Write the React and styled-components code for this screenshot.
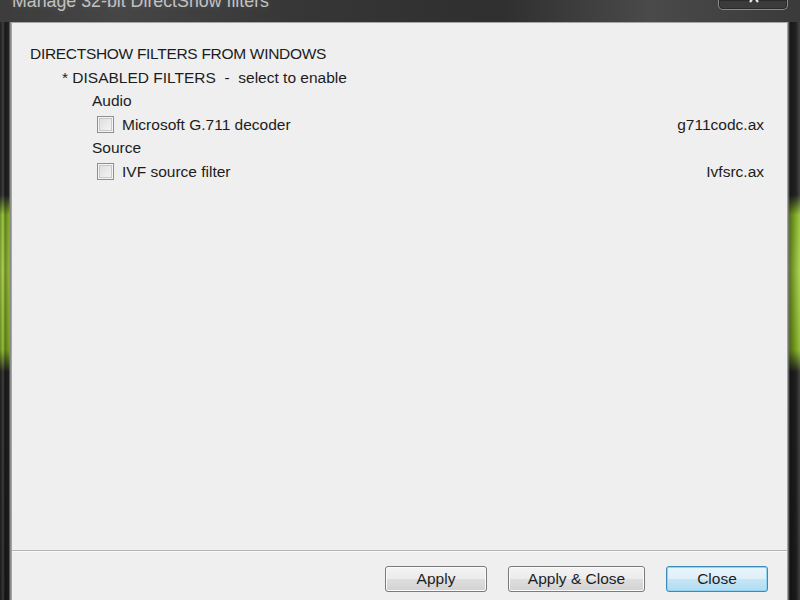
import React from 'react'
import styled, { createGlobalStyle } from 'styled-components'

const GlobalStyle = createGlobalStyle`
  html, body {
    margin: 0;
    padding: 0;
    background: #1f1f1f;
  }
  * {
    box-sizing: border-box;
  }
`

const filters = [
    {
        group: 'Audio',
        items: [{ name: 'Microsoft G.711 decoder', file: 'g711codc.ax' }],
    },
    {
        group: 'Source',
        items: [{ name: 'IVF source filter', file: 'Ivfsrc.ax' }],
    },
]

const App = () => {
    return (
        <>
            <GlobalStyle />
            <Window>
                <TitleBar>
                    <Title>Manage 32-bit DirectShow filters</Title>
                    <CloseCaption>
                        {/* only the feet of the caption X show below the screen edge */}
                        <svg width="14" height="10" viewBox="0 0 14 10">
                            <path d="M2 -10 L11 2 M12 -10 L3 2" stroke="#e8e8e8" strokeWidth="2.2" fill="none" />
                        </svg>
                    </CloseCaption>
                </TitleBar>
                <Client>
                    <Content>
                        <Line $indent={0} $caps>DIRECTSHOW FILTERS FROM WINDOWS</Line>
                        <Line $indent={32}>* DISABLED FILTERS&nbsp; - &nbsp;select to enable</Line>
                        {filters.map((g) => (
                            <React.Fragment key={g.group}>
                                <Line $indent={62}>{g.group}</Line>
                                {g.items.map((f) => (
                                    <FilterRow key={f.name}>
                                        <CheckLabel>
                                            <Check />
                                            {f.name}
                                        </CheckLabel>
                                        <FileName>{f.file}</FileName>
                                    </FilterRow>
                                ))}
                            </React.Fragment>
                        ))}
                    </Content>
                    <Footer>
                        <Button $w={102}>Apply</Button>
                        <Button $w={137}>Apply &amp; Close</Button>
                        <Button $w={102} $primary>Close</Button>
                    </Footer>
                </Client>
            </Window>
        </>
    )
}

export default App

const Window = styled.div`
width: 800px;
height: 600px;
display: flex;
flex-direction: column;
font-family: 'Liberation Sans', Arial, sans-serif;
background:
    linear-gradient(to right,
        rgba(0, 0, 0, 0.25) 0, rgba(255, 255, 255, 0.12) 3px, rgba(0, 0, 0, 0.35) 5px,
        rgba(0, 0, 0, 0.1) 9px, #8a8a8a 10px, #8a8a8a 11px, transparent 11px,
        transparent 788px, #7a7a7a 788px, rgba(0, 0, 0, 0.4) 790px,
        rgba(0, 0, 0, 0.1) 796px, rgba(255, 255, 255, 0.15) 800px),
    linear-gradient(to bottom, #262626 0, #262626 195px, #8fbf2c 215px, #a2cc40 270px, #86b424 350px, #232323 372px, #1e1e1e 600px);
`

const TitleBar = styled.div`
height: 22px;
display: flex;
justify-content: space-between;
align-items: flex-start;
padding: 0 12px;
background: linear-gradient(to right, #3c3c3c 0, #464646 120px, #363636 300px, #2f2f2f 500px, #4a4a4a 650px, #3a3a3a 800px);
`

const Title = styled.div`
margin-top: -8px;
font-size: 17.8px;
line-height: 18px;
color: #c2c2c2;
text-shadow: 0 0 6px rgba(255, 255, 255, 0.15);
`

const CloseCaption = styled.div`
width: 70px;
height: 10px;
display: flex;
justify-content: center;
align-items: flex-start;
border: 1px solid #8a8a8a;
border-top: none;
border-radius: 0 0 5px 5px;
background: #3b3b3b;
box-shadow: inset 0 0 0 1px #2a2a2a;

svg {
    display: block;
    margin-left: 2px;
}
`

const Client = styled.div`
flex: 1;
display: flex;
flex-direction: column;
margin: 0 12px 0 11px;
background: #efefef;
border: 1px solid #a5a5a5;
border-bottom: none;
`

const Content = styled.div`
flex: 1;
padding: 19px 23px 0 18px;
font-size: 15.5px;
line-height: 23.5px;
color: #1c1c1c;
`

const Line = styled.div`
padding-left: ${(p) => p.$indent}px;
letter-spacing: ${(p) => (p.$caps ? '-0.3px' : '0')};
`

const FilterRow = styled.div`
display: flex;
justify-content: space-between;
align-items: center;
padding-left: 67px;
height: 23.5px;
`

const CheckLabel = styled.div`
display: flex;
align-items: center;
gap: 8px;
`

const Check = styled.span`
width: 17px;
height: 17px;
border: 1px solid #8f8f8f;
background: linear-gradient(135deg, #dcdcdc, #f6f6f6);
box-shadow: inset 0 0 0 1px #f4f4f4, inset 0 0 0 2px #c8c8c8;
`

const FileName = styled.div``

const Footer = styled.div`
height: 50px;
display: flex;
justify-content: flex-end;
align-items: flex-start;
gap: 21px;
padding: 15px 19px 0 0;
border-top: 1px solid #b4b4b4;
box-shadow: inset 0 1px 0 #f8f8f8;
`

const Button = styled.button`
width: ${(p) => p.$w}px;
height: 26px;
padding: 0;
font-family: 'Liberation Sans', Arial, sans-serif;
font-size: 15.5px;
color: #1e1e1e;
border-radius: 3px;
border: 1px solid ${(p) => (p.$primary ? '#3c8ab8' : '#7a7a7a')};
background: ${(p) =>
    p.$primary
        ? 'linear-gradient(to bottom, #e8f5fc 0, #dff0fa 48%, #c4e5f6 52%, #b2dbf1 100%)'
        : 'linear-gradient(to bottom, #f4f4f4 0, #ececec 48%, #dedede 52%, #d2d2d2 100%)'};
box-shadow: inset 0 0 0 1px ${(p) => (p.$primary ? '#8fd4f4' : '#fbfbfb')};
`
